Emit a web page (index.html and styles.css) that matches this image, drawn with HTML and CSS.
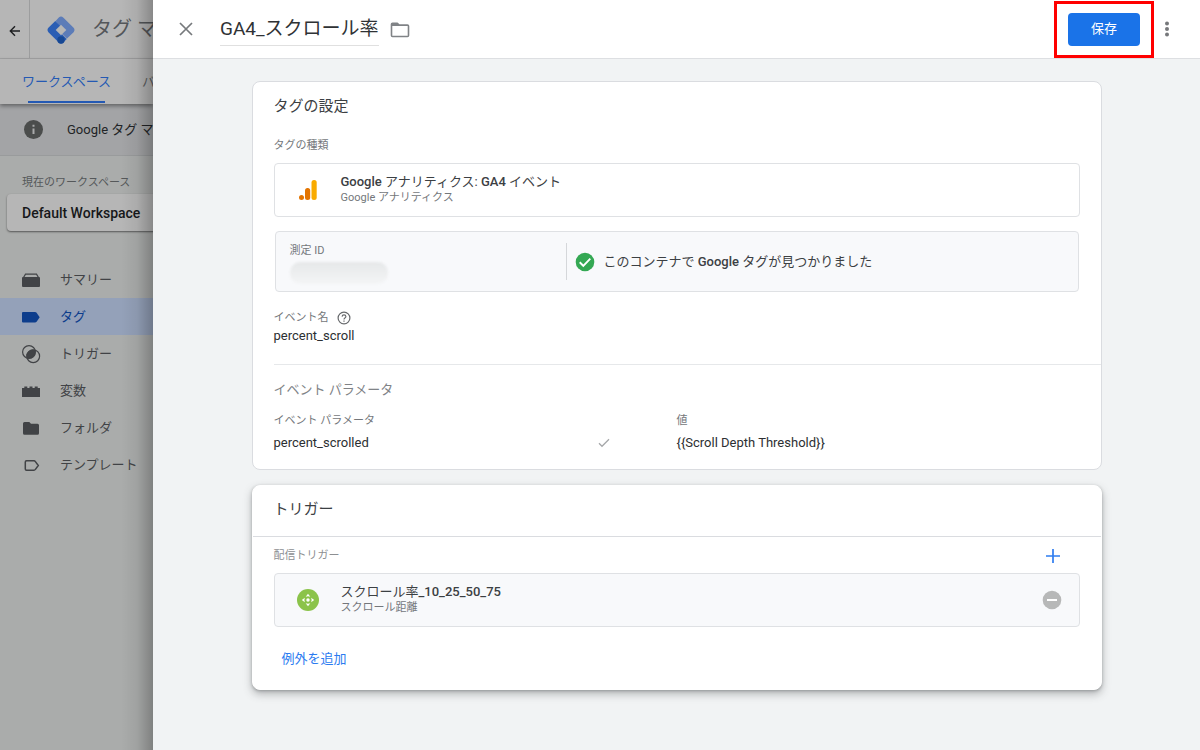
FILE: index.html
```html
<!DOCTYPE html>
<html lang="ja">
<head>
<meta charset="utf-8">
<meta name="viewport" content="width=device-width, initial-scale=1">
<title>GA4_スクロール率</title>
<link rel="stylesheet" href="styles.css">
</head>
<body>
<div class="layout">
  <aside class="app">
    <header class="app-bar">
      <button class="back" type="button" aria-label="戻る">
        <svg width="12" height="12" viewBox="0 0 12 12" fill="none" stroke="#1d1e20" stroke-width="1.4"><path d="M11 6H1.5M6 1.3L1.3 6L6 10.7"/></svg>
      </button>
      <svg class="logo" width="28" height="28" viewBox="0 0 28 28">
        <path d="M11.800 1.400Q14 -.600 16.200 1.400L26.600 11.800Q28.400 14 26.600 16.200L20 22.600L14 16.400L16.600 14L14 11.400L8.600 5Z" fill="#5c7cb8"/>
        <path d="M8.300 4.900L14.100 10.800L10.900 14L19.800 22.900L16.200 26.600Q14 28.400 11.800 26.600L1.400 16.200Q-.400 14 1.400 11.800Z" fill="#2b5eb4"/>
        <circle cx="14" cy="24" r="3.700" fill="#174894"/>
        <path d="M14 8.700L19.300 14L14 19.300L8.700 14Z" fill="#b6b6b6"/>
      </svg>
      <span class="product">タグ マネージャー</span>
    </header>
    <nav class="tabs">
      <a class="tab tab-active" href="#workspace">ワークスペース</a>
      <a class="tab tab-clipped" href="#versions">バージョン</a>
    </nav>
    <div class="notice">
      <svg width="19" height="19" viewBox="0 0 19 19"><circle cx="9.500" cy="9.500" r="9.500" fill="#4b4d4c"/><path d="M9.500 8.500V14M9.500 4.800V6.700" stroke="#a9aaaa" stroke-width="2"/></svg>
      <span class="notice-text">Google タグ マネージャー</span>
    </div>
    <p class="ws-label">現在のワークスペース</p>
    <button class="ws-picker" type="button">Default Workspace</button>
    <nav class="side-nav">
      <a class="item" href="#summary">
        <svg width="20" height="20" viewBox="0 0 20 20"><path d="M2.500 7.500L4.500 4.200H15.500L17.500 7.500" fill="none" stroke="#414346" stroke-width="1.200"/><rect x="1" y="7" width="18" height="10" rx="1" fill="#414346"/></svg>
        サマリー</a>
      <a class="item item-active" href="#tags" aria-current="page">
        <svg width="20" height="20" viewBox="0 0 20 20"><path d="M2 5H14Q15 5 15.600 5.800L18.700 10.300L15.600 14.800Q15 15.600 14 15.600H2Q1 15.600 1 14.600V6Q1 5 2 5Z" fill="#0d3d8c"/></svg>
        タグ</a>
      <a class="item" href="#triggers">
        <svg width="20" height="20" viewBox="0 0 20 20"><path d="M14.100 6A6.300 6.300 0 0 0 5.900 14.100A6.300 6.300 0 0 0 14.100 6Z" fill="#414346"/><g fill="none" stroke="#414346" stroke-width="1.200"><circle cx="8" cy="8" r="6.400"/><circle cx="12.200" cy="12.200" r="6.400"/></g></svg>
        トリガー</a>
      <a class="item" href="#variables">
        <svg width="20" height="20" viewBox="0 0 20 20"><path d="M1 7H3.300V5.500H6.300V7H8.500V5.500H11.500V7H13.700V5.500H16.700V7H19V16H1Z" fill="#414346"/></svg>
        変数</a>
      <a class="item" href="#folders">
        <svg width="20" height="20" viewBox="0 0 20 20"><path d="M3.500 4H8.300L10 5.700H16.500Q18 5.700 18 7.200V15.300Q18 16.800 16.500 16.800H3.500Q2 16.800 2 15.300V5.500Q2 4 3.500 4Z" fill="#414346"/></svg>
        フォルダ</a>
      <a class="item" href="#templates">
        <svg width="20" height="20" viewBox="0 0 20 20"><path d="M5.500 5.800H13Q13.800 5.800 14.400 6.600L17.300 10.500L14.400 14.400Q13.800 15.200 13 15.200H5.500Q4.300 15.200 4.300 14V7Q4.300 5.800 5.500 5.800Z" fill="none" stroke="#414346" stroke-width="1.500"/></svg>
        テンプレート</a>
    </nav>
  </aside>

  <main class="sheet">
    <header class="sheet-bar">
      <button class="icon-button" type="button" aria-label="閉じる">
        <svg width="14" height="14" viewBox="0 0 14 14" stroke="#76797c" stroke-width="1.700"><path d="M1 1L13 13M13 1L1 13"/></svg>
      </button>
      <h1 class="sheet-title">GA4_スクロール率</h1>
      <button class="icon-button folder" type="button" aria-label="フォルダに移動">
        <svg width="20" height="16" viewBox="0 0 20 16"><path d="M2.500 .5H7.500L9.500 2.300H17.500Q19.300 2.300 19.300 4V13.500Q19.300 15.300 17.500 15.300H2.500Q.700 15.300 .700 13.500V2.200Q.700 .5 2.500 .5ZM2.300 4V13.700H17.700V4Z" fill="#808386" fill-rule="evenodd"/></svg>
      </button>
      <div class="highlight"><button class="save" type="button">保存</button></div>
      <button class="icon-button" type="button" aria-label="その他">
        <svg width="6" height="16" viewBox="0 0 6 16" fill="#76787b"><circle cx="3" cy="2.500" r="2"/><circle cx="3" cy="8" r="2"/><circle cx="3" cy="13.500" r="2"/></svg>
      </button>
    </header>

    <div class="content">
      <section class="card">
        <h2 class="card-title">タグの設定</h2>
        <h3 class="label type-label">タグの種類</h3>
        <div class="box">
          <svg class="box-icon" width="22" height="22" viewBox="0 0 22 22"><circle cx="4.500" cy="18.500" r="2.500" fill="#e37400"/><rect x="8" y="9" width="5.200" height="12" rx="2.500" fill="#e37400"/><rect x="14.500" y="1" width="5.200" height="20" rx="2.500" fill="#f9ab00"/></svg>
          <div>
            <div class="box-title"><b>Google</b> アナリティクス: <b>GA4</b> イベント</div>
            <div class="label">Google アナリティクス</div>
          </div>
        </div>
        <div class="measure">
          <div class="measure-id">
            <div class="label">測定 ID</div>
            <div class="masked"></div>
          </div>
          <div class="found">
            <svg width="20" height="20" viewBox="0 0 20 20"><circle cx="10" cy="10" r="9.300" fill="#34a853"/><path d="M4.700 10.300L8.300 13.800L15.300 6.700" fill="none" stroke="#fff" stroke-width="1.900"/></svg>
            <span>このコンテナで <b>Google</b> タグが見つかりました</span>
          </div>
        </div>
        <div class="event">
          <h3 class="label event-label">イベント名
            <svg width="14" height="14" viewBox="0 0 14 14" fill="none" stroke="#67696c" stroke-width="1.200"><circle cx="7" cy="7" r="5.900"/><path d="M5.100 5.600Q5.200 3.800 7 3.800T8.900 5.500Q8.900 6.400 7.900 7Q7 7.600 7 8.600M7 9.500V10.700"/></svg>
          </h3>
          <div class="value">percent_scroll</div>
        </div>
        <div class="params">
          <h3 class="params-title">イベント パラメータ</h3>
          <table class="param-table">
            <thead><tr><th class="label" scope="col">イベント パラメータ</th><th class="label" scope="col">値</th></tr></thead>
            <tbody><tr>
              <td><div class="param-name">percent_scrolled
                <svg width="12" height="10" viewBox="0 0 12 10" fill="none" stroke="#a5a7a9" stroke-width="1.300"><path d="M1 5.300L4 8.300L11 1.200"/></svg></div></td>
              <td>{{Scroll Depth Threshold}}</td>
            </tr></tbody>
          </table>
        </div>
      </section>

      <section class="card card-raised">
        <h2 class="card-title card-head">トリガー</h2>
        <div class="firing">
          <h3 class="label firing-label">配信トリガー</h3>
          <button class="icon-button" type="button" aria-label="トリガーを追加">
            <svg width="14" height="14" viewBox="0 0 14 14" stroke="#2f7df0" stroke-width="1.700"><path d="M7 0V14M0 7H14"/></svg>
          </button>
        </div>
        <div class="box box-tinted">
          <svg class="box-icon" width="22" height="22" viewBox="0 0 22 22"><circle cx="11" cy="11" r="11" fill="#8bc34a"/><g fill="#fff"><circle cx="11" cy="11" r="1.700"/><path d="M11 4.800L13.300 7.800Q11 6.900 8.700 7.800ZM11 17.200L8.700 14.200Q11 15.100 13.300 14.200ZM4.800 11L7.800 8.700Q6.900 11 7.800 13.300ZM17.200 11L14.200 13.300Q15.100 11 14.200 8.700Z"/></g></svg>
          <div>
            <div class="box-title">スクロール率<b>_10_25_50_75</b></div>
            <div class="label">スクロール距離</div>
          </div>
          <button class="icon-button remove" type="button" aria-label="トリガーを削除">
            <svg width="20" height="20" viewBox="0 0 20 20"><circle cx="10" cy="10" r="9.300" fill="#b7b8b8"/><path d="M5 10H15" stroke="#fff" stroke-width="2"/></svg>
          </button>
        </div>
        <button class="add-exception" type="button">例外を追加</button>
      </section>
    </div>
  </main>
</div>
</body>
</html>
```
FILE: styles.css
```css
* { box-sizing: border-box; }
body {
  margin: 0;
  font: 13px/20px Roboto, "Noto Sans CJK JP", sans-serif;
  color: #3c4043;
}
h1, h2, h3, p { margin: 0; font-weight: 400; }
b { font-weight: 500; }
a { color: inherit; text-decoration: none; }
button { border: 0; padding: 0; background: none; font: inherit; color: inherit; }
svg { display: block; flex: none; }

.layout { display: flex; min-height: 100vh; }

/* Dimmed application behind the sheet */
.app {
  position: relative;
  flex: none;
  width: 153px;
  overflow: hidden;
  white-space: nowrap;
  background: #aaacab;
  color: #414346;
}
.app::after {
  content: "";
  position: absolute;
  inset: 0 0 0 auto;
  width: 32px;
  background: linear-gradient(to right, transparent, rgba(0, 0, 0, .06) 50%, rgba(0, 0, 0, .25));
}
.app-bar {
  display: flex;
  align-items: center;
  height: 59px;
  background: #b6b6b6;
  border-bottom: 1px solid #a2a3a4;
}
.back {
  display: grid;
  flex: none;
  place-items: center;
  width: 30px;
  height: 100%;
  padding-top: 3px;
  border-right: 1px solid #9c9d9e;
}
.logo { margin: 2px 17px 0 17px; }
.product {
  flex: 1;
  min-width: 0;
  overflow: hidden;
  font-size: 20px;
  line-height: 28px;
  color: #54575a;
}
.tabs {
  position: relative;
  display: flex;
  gap: 31px;
  height: 45px;
  padding-left: 22px;
  background: #b6b6b6;
  box-shadow: 0 2px 4px rgba(0, 0, 0, .4);
  line-height: 45px;
}
.tab { position: relative; flex: none; color: #5c5f62; }
.tab-active { color: #2459b3; }
.tab-clipped { flex: 1; min-width: 0; overflow: hidden; }
.tab-active::after {
  content: "";
  position: absolute;
  inset: auto 6px 1px;
  height: 2px;
  background: #2459b3;
}
.notice {
  display: flex;
  align-items: center;
  gap: 24px;
  height: 52px;
  padding-left: 24px;
  background: #a3a4a6;
  border-bottom: 1px solid #999b9c;
  color: #222426;
}
.notice-text { flex: 1; min-width: 0; overflow: hidden; }
.ws-label { padding: 19px 22px 3px; font-size: 11px; line-height: 16px; color: #55585a; }
.ws-picker {
  display: block;
  width: 160px;
  height: 37px;
  margin-left: 7px;
  padding-left: 15px;
  border-radius: 4px;
  background: #b6b6b6;
  box-shadow: 0 1px 2px rgba(0, 0, 0, .5);
  font-size: 14px;
  font-weight: 500;
  text-align: left;
  color: #17181a;
}
.side-nav { padding-top: 30px; }
.item {
  display: flex;
  align-items: center;
  gap: 19px;
  height: 37px;
  padding-left: 21px;
}
.item-active { background: #94a1b9; color: #0d3d8c; }

/* Sheet */
.sheet { flex: 1; min-width: 0; background: #f1f3f4; }
.sheet-bar {
  display: flex;
  align-items: center;
  height: 59px;
  padding: 0 30px 0 26px;
  background: #fff;
  border-bottom: 1px solid #dddfe2;
}
.icon-button { display: grid; place-items: center; }
.folder { padding-top: 2px; }
.sheet-title {
  margin: 1px 11px 0 27px;
  border-bottom: 1px solid #e0e0e0;
  font-size: 19px;
  line-height: 32px;
  color: #2f3235;
}
.highlight {
  margin: 0 10px 0 auto;
  padding: 9px 11px;
  border: 3px solid #f00;
}
.save {
  display: block;
  width: 72px;
  height: 33px;
  border-radius: 4px;
  background: #1a73e8;
  color: #fff;
}
.content {
  display: flex;
  flex-direction: column;
  gap: 15px;
  max-width: 882px;
  margin: 0 auto;
  padding: 22px 16px 40px;
}
.card {
  padding: 14px 21px 16px;
  border: 1px solid #dadce0;
  border-radius: 8px;
  background: #fff;
}
.card-title { font-size: 15px; }
.label { font-size: 11px; line-height: 16px; font-weight: 400; color: #74777b; }
.type-label { margin: 22px 0 9px; }
.box {
  display: flex;
  align-items: center;
  height: 54px;
  padding: 0 17px 0 22px;
  border: 1px solid #dfe1e4;
  border-radius: 4px;
}
.box-tinted { background: #f8f9fb; }
.box-icon { margin-right: 22px; }
.box-title { line-height: 16px; }
.measure {
  display: grid;
  grid-template-columns: 290px 1fr;
  align-items: center;
  height: 61px;
  margin: 14px 1px 0;
  border: 1px solid #dfe1e4;
  border-radius: 4px;
  background: #f8f9fb;
}
.measure-id { padding: 4px 0 0 14px; }
.masked {
  width: 98px;
  height: 22px;
  margin-top: 3px;
  border-radius: 10px;
  background: linear-gradient(#e6e8e9, #f4f5f6);
  filter: blur(1px);
}
.found {
  display: flex;
  align-items: center;
  gap: 9px;
  height: 37px;
  padding-left: 8px;
  border-left: 1px solid #d5d7da;
}
.event { padding: 18px 0; }
.event-label { display: flex; align-items: center; gap: 8px; }
.value, .param-table td { color: #2c2f32; }
.params { margin-right: -21px; padding: 15px 21px 0 0; border-top: 1px solid #e6e8ea; }
.params-title { font-size: 13px; color: #808387; }
.param-table { width: 100%; margin-top: 13px; table-layout: fixed; border-collapse: collapse; }
.param-table th { padding: 0 0 4px; text-align: left; }
.param-table td { padding: 0; }
.param-name { display: flex; align-items: center; justify-content: space-between; padding-right: 67px; }

.card-raised {
  padding-top: 13px;
  padding-bottom: 20px;
  border-color: #fff;
  box-shadow: 0 4px 8px rgba(60, 64, 67, .35), 0 1px 3px rgba(60, 64, 67, .3);
}
.card-head {
  margin: 0 -21px;
  padding: 0 21px 17px;
  border-bottom: 1px solid #dadce0;
}
.firing {
  display: flex;
  align-items: center;
  justify-content: space-between;
  padding: 11px 20px 9px 0;
}
.firing-label { color: #8d8f92; }
.remove { margin-left: auto; }
.add-exception { display: block; margin: 22px 0 0 8px; color: #2b7bf0; }
```
